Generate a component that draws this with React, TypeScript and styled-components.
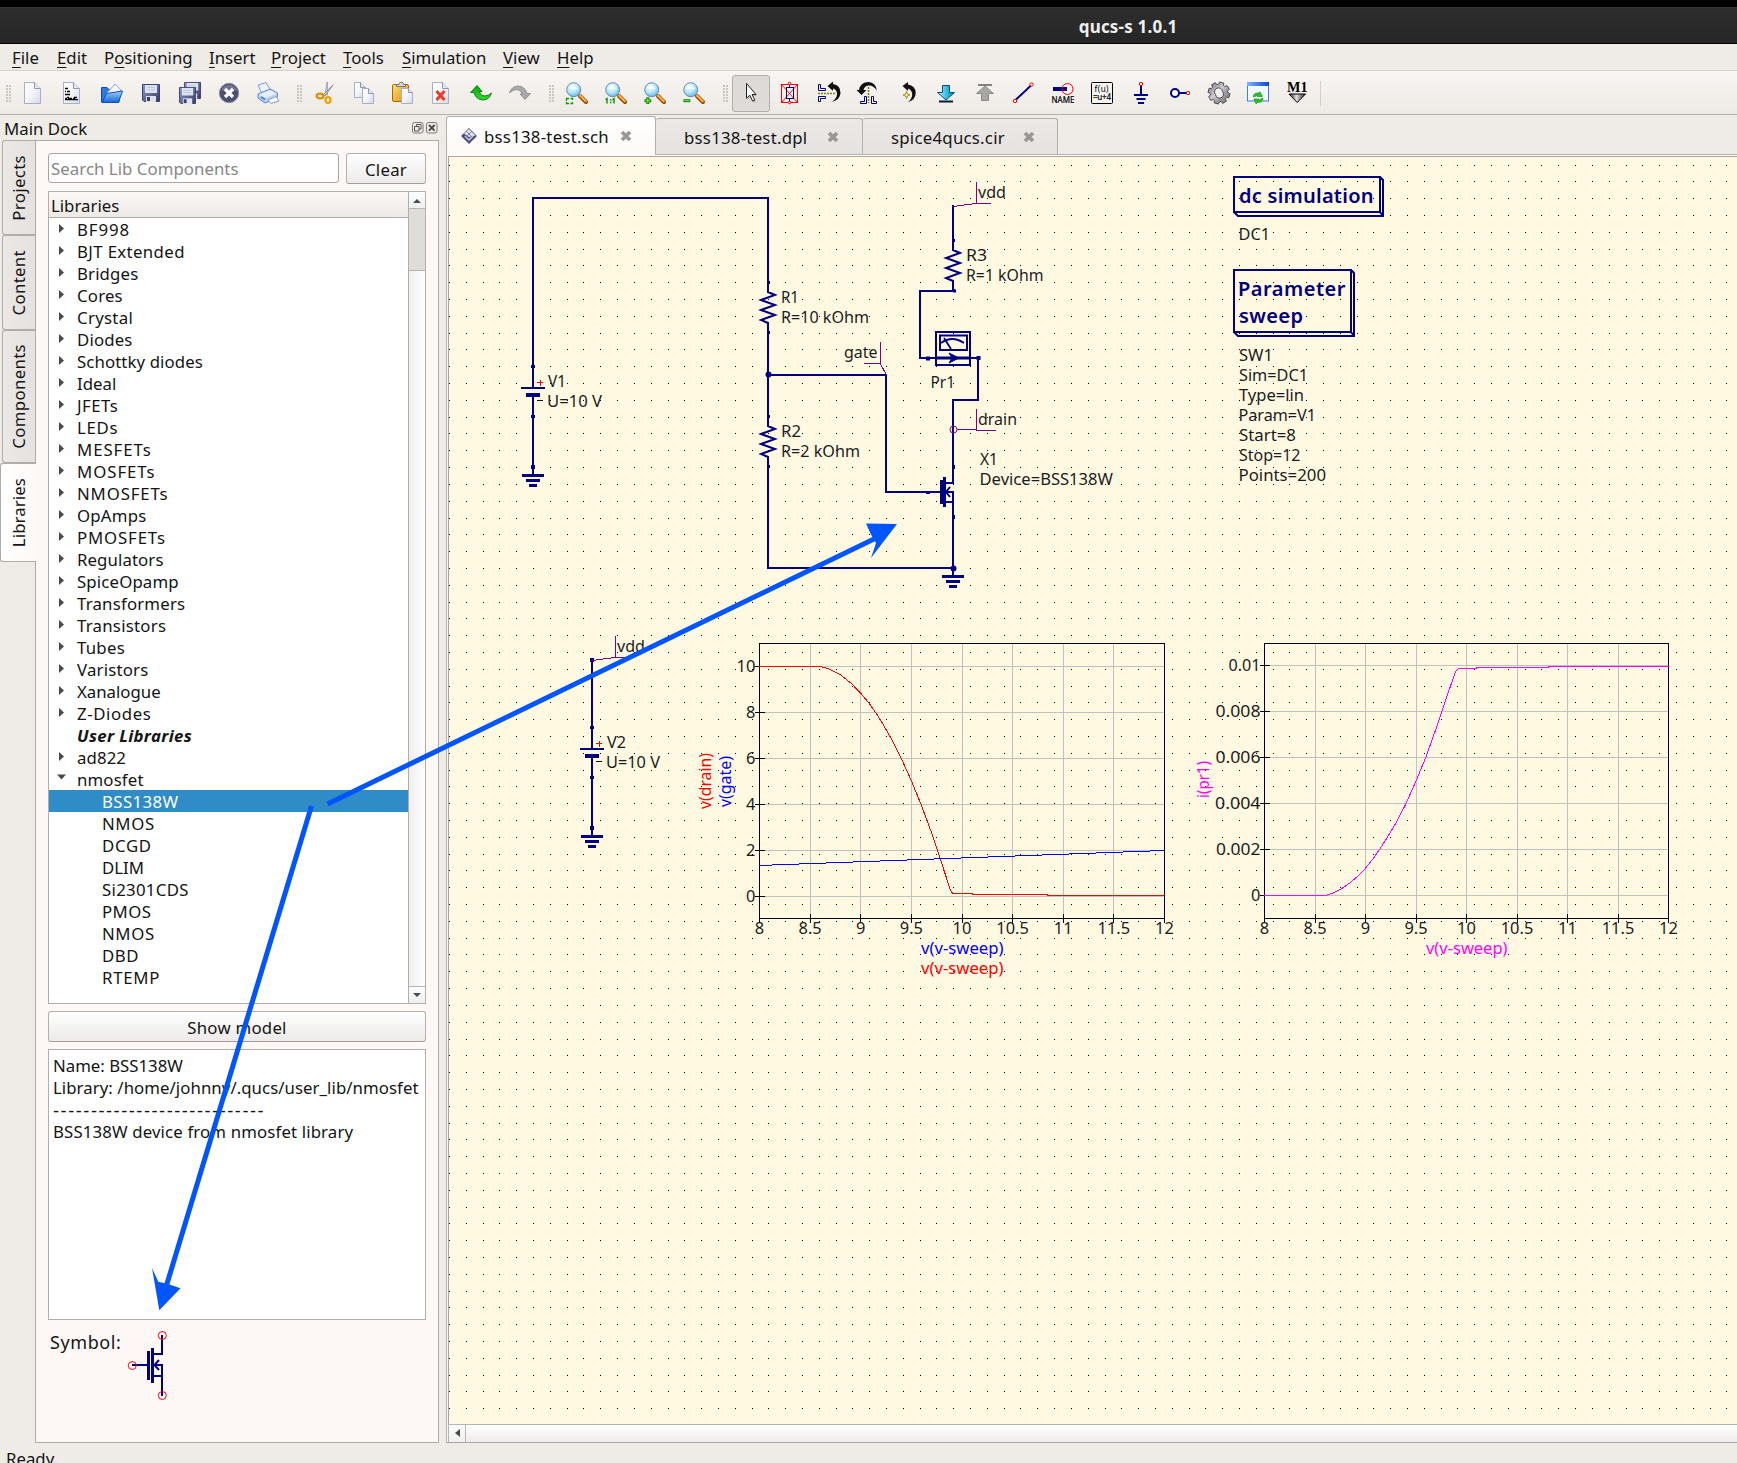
import React from "react";
import styled, { createGlobalStyle } from "styled-components";

const NAVY = "#000080";
const PURPLE = "#800080";
const UI_FONT = '"Noto Sans", "Open Sans", sans-serif';

const GlobalStyle = createGlobalStyle`
  html, body { margin: 0; padding: 0; overflow: hidden; }
  body { font-family: ${UI_FONT}; font-size: 16.8px; color: #141414; background: #efebe7; }
  * { box-sizing: border-box; }
`;

/* ---------- window chrome ---------- */

const Window = styled.div`
  position: relative;
  display: flex;
  flex-direction: column;
  width: 1737px;
  height: 1463px;
  overflow: hidden;
  background: #efebe7;
`;

const TitleBar = styled.header`
  flex: none;
  height: 44px;
  border-top: 7px solid #000;
  border-bottom: 1px solid #050505;
  background: linear-gradient(#383838 0, #2d2d2d 2px, #262626 100%);
  padding: 2px 0 0 519px;
  display: flex;
  align-items: center;
  justify-content: center;
  color: #f0efed;
  font-size: 17px;
  font-weight: 700;
  letter-spacing: 0.2px;
`;

const MenuBar = styled.nav`
  flex: none;
  height: 27px;
  border-bottom: 1px solid #d5d1cd;
  display: flex;
  padding-left: 12px;
  gap: 16px;
  line-height: 28px;
`;

const MenuItem = styled.span<{ $w: number }>`
  width: ${(p) => p.$w}px;
  white-space: nowrap;
  u {
    text-underline-offset: 3px;
    text-decoration-thickness: 1px;
  }
`;

const ToolBar = styled.div`
  flex: none;
  height: 44px;
  border-bottom: 1px solid #b5b1ad;
  background: linear-gradient(#f8f5f2, #edeae6);
  display: flex;
  align-items: flex-start;
  padding-top: 4px;
`;

const Grip = styled.span<{ $before: number }>`
  flex: none;
  width: 5px;
  height: 17px;
  margin: 10px 4px 0 ${(p) => p.$before}px;
  background: radial-gradient(circle at 1px 1px, #c9c5c1 0.8px, transparent 0.9px) 0 0 / 3px 3px;
`;

const ToolGroup = styled.div`
  flex: none;
  display: flex;
`;

const ToolButton = styled.button<{ $pressed?: boolean }>`
  flex: none;
  width: 38px;
  height: 37px;
  margin: 0 1px 0 0;
  padding: 6px 0 0 7px;
  display: flex;
  align-items: flex-start;
  border-radius: 3px;
  border: 1px solid ${(p) => (p.$pressed ? "#b3afab" : "transparent")};
  background: ${(p) => (p.$pressed ? "#dedad7" : "transparent")};
`;

const Separator = styled.span`
  width: 1px;
  height: 25px;
  margin: 6px 0 0 3px;
  background: #d2cecb;
`;

const Workspace = styled.main`
  flex: 1;
  min-height: 0;
  display: flex;
`;

const StatusBar = styled.footer`
  flex: none;
  height: 20px;
  padding-left: 6px;
  line-height: 31px;
`;

/* ---------- dock ---------- */

const Dock = styled.aside`
  flex: none;
  width: 439px;
  display: flex;
  flex-direction: column;
`;

const DockTitle = styled.div`
  flex: none;
  height: 25px;
  padding: 0 1px 0 4px;
  display: flex;
  align-items: center;
  gap: 2px;
  line-height: 26px;
  span { flex: 1; padding-top: 2px; }
`;

const DockBody = styled.div`
  flex: 1;
  min-height: 0;
  display: flex;
`;

const SideTabs = styled.div`
  flex: none;
  width: 35px;
  display: flex;
  flex-direction: column;
  align-items: flex-end;
`;

const SideTab = styled.div<{ $h: number; $active?: boolean }>`
  flex: none;
  width: ${(p) => (p.$active ? 36 : 33)}px;
  margin-right: ${(p) => (p.$active ? -1 : 0)}px;
  height: ${(p) => p.$h}px;
  border: 1px solid #b0acaa;
  border-right: 0;
  border-radius: 3px 0 0 3px;
  background: ${(p) => (p.$active ? "linear-gradient(90deg,#fff,#fdf9f6)" : "linear-gradient(90deg,#ebe8e6,#e5e1df)")};
  z-index: ${(p) => (p.$active ? 1 : 0)};
  display: flex;
  align-items: center;
  justify-content: center;
  letter-spacing: ${(p) => (p.$active ? 0.1 : 0.35)}px;
  span {
    writing-mode: vertical-rl;
    transform: rotate(180deg);
    line-height: 24px;
  }
`;

const DockPanel = styled.section`
  flex: 1;
  min-width: 0;
  border: 1px solid #aeaaa7;
  background: #fdf8f5;
  padding: 12px 12px 0;
  display: flex;
  flex-direction: column;
`;

const SearchRow = styled.div`
  flex: none;
  display: flex;
  gap: 7px;
  height: 31px;
`;

const SearchField = styled.div`
  width: 291px;
  height: 30px;
  border: 1px solid #aaa6a3;
  border-radius: 3px;
  background: #fff;
  padding-left: 2px;
  line-height: 29px;
  letter-spacing: 0.05px;
  color: #868686;
`;

const PushButton = styled.button`
  flex: 1;
  padding: 2px 0 0;
  border: 1px solid #b3afac;
  border-bottom-color: #a29e9b;
  border-radius: 3px;
  background: linear-gradient(#fefefe, #ecebe9);
  font: inherit;
  color: inherit;
  letter-spacing: 0.25px;
  line-height: 27px;
`;

const ShowModel = styled(PushButton)`
  flex: none;
  height: 31px;
  margin-top: 7px;
`;

const Tree = styled.div`
  flex: none;
  height: 813px;
  margin-top: 7px;
  border: 1px solid #b2aeab;
  background: #fff;
  display: flex;
`;

const TreeList = styled.div`
  flex: 1;
  min-width: 0;
`;

const TreeHeader = styled.div`
  height: 26px;
  padding-left: 2px;
  line-height: 28px;
  border-bottom: 1px solid #b2aeab;
  background: linear-gradient(#fbf8f6, #ece9e6);
`;

const TreeRow = styled.div<{ $track?: number; $child?: boolean; $selected?: boolean; $heading?: boolean }>`
  height: 22px;
  line-height: 22px;
  display: flex;
  align-items: flex-start;
  padding: 1px 0 0 ${(p) => (p.$child ? 53 : 8)}px;
  color: ${(p) => (p.$selected ? "#fff" : "inherit")};
  background: ${(p) => (p.$selected ? "#308cc6" : "transparent")};
  font-weight: ${(p) => (p.$heading ? 700 : 400)};
  font-style: ${(p) => (p.$heading ? "italic" : "normal")};
  letter-spacing: ${(p) => p.$track ?? 0}px;
`;

const Twisty = styled.span`
  width: 20px;
  height: 21px;
  flex: none;
  svg { display: block; }
`;

const VScroll = styled.div`
  flex: none;
  width: 17px;
  border-left: 1px solid #b2aeab;
  display: flex;
  flex-direction: column;
  background: linear-gradient(90deg, #f0efed, #fdfdfd);
`;

const VTrack = styled.div`
  height: 62px;
  background: #dfddda;
  border-bottom: 1px solid #b8b4b1;
`;

const ScrollStep = styled.div<{ $side: "top" | "bottom" | "left" }>`
  flex: none;
  width: ${(p) => (p.$side === "left" ? 17 : 16)}px;
  height: 17px;
  background: linear-gradient(#fdfdfd, #f0efee);
  ${(p) => (p.$side === "top" ? "border-bottom" : p.$side === "bottom" ? "border-top" : "border-right")}: 1px solid #b8b4b1;
  svg { display: block; }
`;

const Spacer = styled.div`
  flex: 1;
`;

const InfoBox = styled.div`
  flex: none;
  height: 271px;
  margin-top: 7px;
  padding: 5px 4px;
  border: 1px solid #b2aeab;
  background: #fff;
  line-height: 22px;
  white-space: nowrap;
`;

const InfoLine = styled.div<{ $track?: number }>`
  height: 22px;
  letter-spacing: ${(p) => p.$track ?? 0}px;
`;

const InfoRule = styled(InfoLine)`
  font-family: "DejaVu Sans", sans-serif;
`;

const SymbolRow = styled.div`
  display: flex;
  padding-left: 2px;
  font-size: 18px;
  letter-spacing: 0.6px;
  svg { margin-top: 5px; }
`;

const SymbolLabel = styled.span`
  width: 77px;
  padding-top: 10px;
`;

/* ---------- documents ---------- */

const Documents = styled.section`
  flex: 1;
  min-width: 0;
  margin-left: 7px;
  display: flex;
  flex-direction: column;
`;

const DocTabs = styled.div`
  flex: none;
  height: 40px;
  padding-top: 2px;
  display: flex;
  align-items: flex-end;
  border-bottom: 1px solid #b5b1ae;
`;

const DocTab = styled.div<{ $w: number; $active?: boolean }>`
  width: ${(p) => p.$w}px;
  height: ${(p) => (p.$active ? 39 : 36)}px;
  margin-bottom: ${(p) => (p.$active ? -1 : 0)}px;
  padding-left: ${(p) => (p.$active ? 14 : 28)}px;
  border: 1px solid #b3afac;
  border-bottom: 0;
  border-left-width: ${(p) => (p.$active ? 1 : 0)}px;
  border-radius: 3px 3px 0 0;
  background: ${(p) => (p.$active ? "linear-gradient(#fff,#fdf9f6)" : "linear-gradient(#ebe8e6,#e5e2e0)")};
  display: flex;
  align-items: center;
  line-height: 34px;
`;

const DocName = styled.span<{ $w: number; $indent?: number }>`
  width: ${(p) => p.$w}px;
  margin-left: ${(p) => p.$indent ?? 0}px;
  padding-top: 2px;
  letter-spacing: 0.25px;
  white-space: nowrap;
`;

const DocFrame = styled.div`
  flex: 1;
  min-height: 0;
  border-left: 1px solid #b5b1ae;
  border-bottom: 1px solid #a9a5a2;
  background: #fdf9f6;
  padding: 1px 0 0 1px;
  display: flex;
  flex-direction: column;
`;

const Canvas = styled.div`
  flex: 1;
  min-height: 0;
  border-left: 1px solid #aaa6a3;
  border-top: 1px solid #aaa6a3;
  background: #fff9e2;
  overflow: hidden;
  svg { display: block; }
`;

const HScroll = styled.div`
  flex: none;
  height: 18px;
  border-left: 1px solid #b8b4b1;
  border-top: 1px solid #b8b4b1;
  display: flex;
  background: linear-gradient(#fefefe, #eeedeb);
`;

const Annotations = styled.svg`
  position: absolute;
  left: 0;
  top: 0;
  pointer-events: none;
`;

/* ---------- toolbar icons ---------- */

const IconSvg = styled.svg`
  display: block;
  flex: none;
  overflow: visible;
`;

const SharedDefs = styled.svg`
  position: absolute;
`;

const Icon = ({ children }: { children: React.ReactNode }) => (
  <IconSvg width="22" height="22" viewBox="0 0 22 22">{children}</IconSvg>
);

const Gradients = () => (
  <SharedDefs width="0" height="0">
    <defs>
      <linearGradient id="paper" x1="0" y1="0" x2="1" y2="1">
        <stop offset="0" stopColor="#fff" /><stop offset="0.5" stopColor="#f4f5fa" /><stop offset="1" stopColor="#d3d7e8" />
      </linearGradient>
      <linearGradient id="blueFold" x1="0" y1="0" x2="0" y2="1">
        <stop offset="0" stopColor="#9ad4ff" /><stop offset="1" stopColor="#1663d8" />
      </linearGradient>
      <linearGradient id="floppy" x1="0" y1="0" x2="1" y2="1">
        <stop offset="0" stopColor="#8f9cc4" /><stop offset="1" stopColor="#343a66" />
      </linearGradient>
      <radialGradient id="lens" cx="0.4" cy="0.3" r="0.8">
        <stop offset="0" stopColor="#fff" /><stop offset="0.5" stopColor="#b6e6fb" /><stop offset="1" stopColor="#4fa8e0" />
      </radialGradient>
      <linearGradient id="gold" x1="0" y1="0" x2="1" y2="1">
        <stop offset="0" stopColor="#ffe27a" /><stop offset="1" stopColor="#e08a00" />
      </linearGradient>
      <linearGradient id="greenG" x1="0" y1="0" x2="0" y2="1">
        <stop offset="0" stopColor="#0aa50a" /><stop offset="1" stopColor="#2be02b" />
      </linearGradient>
      <linearGradient id="grayG" x1="0" y1="0" x2="1" y2="1">
        <stop offset="0" stopColor="#6d6b72" /><stop offset="0.45" stopColor="#cfccd2" /><stop offset="0.6" stopColor="#a5a2a8" /><stop offset="1" stopColor="#6f6d72" />
      </linearGradient>
      <linearGradient id="cyanG" x1="0" y1="0" x2="1" y2="0">
        <stop offset="0" stopColor="#c8f4ff" /><stop offset="0.5" stopColor="#39bfe8" /><stop offset="1" stopColor="#0a7fae" />
      </linearGradient>
      <linearGradient id="silver" x1="0" y1="0" x2="1" y2="0">
        <stop offset="0" stopColor="#222" /><stop offset="0.45" stopColor="#ddd" /><stop offset="1" stopColor="#222" />
      </linearGradient>
      <linearGradient id="bar" x1="0" y1="0" x2="1" y2="0">
        <stop offset="0" stopColor="#7fb4ff" /><stop offset="1" stopColor="#0a48d0" />
      </linearGradient>
    </defs>
  </SharedDefs>
);

const Page = ({ x = 1, y = 0, w = 16, h = 21, f = 6 }) => (
  <g strokeWidth="1">
    <path d={`M${x + 0.5} ${y + 0.5}H${x + w - f + 0.5}L${x + w + 0.5} ${y + f + 0.5}V${y + h + 0.5}H${x + 0.5}Z`} fill="url(#paper)" stroke="#a9aec4" />
    <path d={`M${x + w - f + 0.5} ${y + 0.5}V${y + f + 0.5}H${x + w + 0.5}`} fill="#e3e6f2" stroke="#8f95b3" />
  </g>
);

const Floppy = ({ x, y, s }: { x: number; y: number; s: number }) => (
  <g transform={`translate(${x} ${y}) scale(${s / 18})`}>
    <path d="M0.5 0.5H17.5V17.5H2L0.5 16Z" fill="url(#floppy)" stroke="#3d4370" />
    <rect x="3" y="1" width="12" height="8" fill="#dde2f0" />
    <path d="M5 3.5H13M5 6H13" stroke="#c3c9da" />
    <rect x="4" y="12" width="10" height="6" fill="#dfe3ee" />
    <rect x="5" y="13" width="3" height="4" fill="#343a66" />
  </g>
);

const Magnifier = ({ children }: { children?: React.ReactNode }) => (
  <Icon>
    <path d="M14 14L20 20" stroke="#8a4a00" strokeWidth="4" strokeLinecap="round" />
    <path d="M14 13.5L19.8 19.3" stroke="#ffb54a" strokeWidth="2" strokeLinecap="round" />
    <circle cx="7.7" cy="7.7" r="7" fill="url(#lens)" stroke="#6a8fae" />
    <path d="M3 7A5 4.5 0 0 1 12 7" fill="#fff" opacity="0.7" />
    {children}
  </Icon>
);

const gearOutline = () => {
  const pts: string[] = [];
  const teeth = 8;
  for (let i = 0; i < teeth; i++) {
    [[-0.3, 8.6], [-0.2, 11], [0.2, 11], [0.3, 8.6]].forEach(([da, r]) => {
      const a = (i / teeth) * Math.PI * 2 + 0.25 + da;
      pts.push(`${(11 + r * Math.cos(a)).toFixed(2)} ${(11 + r * Math.sin(a)).toFixed(2)}`);
    });
  }
  return `M${pts.join("L")}Z M7.5 12.5a4 4 0 1 0 7 -3a4 4 0 1 0 -7 3Z`;
};

const icons: Record<string, React.ReactNode> = {
  newDoc: <Icon><Page /></Icon>,
  newText: (
    <Icon>
      <Page />
      <g stroke="#000" strokeWidth="1.3">
        <path d="M3 6.5H6M3 9.5H4M5 9.5H8M3 12.5H8M3 16.5H5M6 16.5H10M11 16.5H13M3 17.7H16M5 15.5H7M12 15.5H15" />
      </g>
    </Icon>
  ),
  open: (
    <Icon>
      <path d="M0.5 20V5.5H6L8 7.5H18V20Z" fill="#2a7be4" stroke="#1249a8" />
      <path d="M5 12L14 2L20 8L17 16Z" fill="#f2f5fc" stroke="#9aa5c8" />
      <path d="M1 20.5L5.5 11.5L21.5 9L17.5 20.5Z" fill="url(#blueFold)" stroke="#0d4fbf" />
    </Icon>
  ),
  save: <Icon><Floppy x={2} y={2} s={18} /></Icon>,
  saveAll: <Icon><Floppy x={5} y={0} s={17} /><Floppy x={0} y={5} s={17} /></Icon>,
  close: (
    <Icon>
      <circle cx="11" cy="11" r="9.7" fill="#4c5070" stroke="#8d90a6" />
      <path d="M3 8A9 9 0 0 1 19 8Q11 11 3 8" fill="#8a8ea8" opacity="0.6" />
      <path d="M7 7L15 15M15 7L7 15" stroke="#fff" strokeWidth="3.2" />
    </Icon>
  ),
  print: (
    <Icon>
      <path d="M1 3L9 0.5L14 9L5 12Z" fill="#edf3ff" stroke="#7f9cd8" />
      <path d="M1 12L13 7L20.5 11L20 16L8 21L1 16Z" fill="#bcd2fb" stroke="#5c83d6" />
      <path d="M2 12.5L13 8L20 11.5L8.5 16Z" fill="#e6efff" />
      <path d="M11 18L19 14.5L22 19L14 21.5Z" fill="#fff" stroke="#7f9cd8" />
      <path d="M4 15L8 17.5" stroke="#3b7cf0" strokeWidth="1.6" />
    </Icon>
  ),
  cut: (
    <Icon>
      <path d="M13.2 0L11 12L13.5 13Z" fill="#e6e8ee" stroke="#8a8d99" strokeWidth="0.8" />
      <path d="M19 3L9 13L11 14Z" fill="#cfd2da" stroke="#777b88" strokeWidth="0.8" />
      <ellipse cx="6" cy="14" rx="3.4" ry="2.4" fill="none" stroke="#e08e00" strokeWidth="2.2" />
      <ellipse cx="14" cy="18" rx="2.5" ry="3" fill="none" stroke="#f0a000" strokeWidth="2.2" />
    </Icon>
  ),
  copy: <Icon><Page x={1} y={0} w={11} h={15} f={5} /><Page x={9} y={6} w={11} h={15} f={5} /></Icon>,
  paste: (
    <Icon>
      <rect x="0.5" y="2.5" width="16" height="17" rx="1.5" fill="url(#gold)" stroke="#a86a00" />
      <path d="M4.5 4.5V2.5H7A2.2 2.2 0 0 1 11.5 2.5H13.5V4.5Z" fill="#d9dbe3" stroke="#777" />
      <Page x={9} y={6} w={11} h={15} f={4} />
    </Icon>
  ),
  remove: (
    <Icon>
      <Page />
      <path d="M5.5 9L13.5 18M13.5 9L5.5 18" stroke="#f03a22" strokeWidth="3" />
    </Icon>
  ),
  undo: (
    <Icon>
      <path d="M0.5 10.5L7 3.5L12 9.5H9Q11 14.5 15 14Q19 13.5 21.5 11Q19.5 17.5 13.5 18Q6 18 4 10.5Z" fill="url(#greenG)" stroke="#087808" strokeWidth="0.9" />
    </Icon>
  ),
  redo: (
    <Icon>
      <path d="M21.5 11.5L16 17.5L11 12H13.5Q12 8 8 7.5Q4 7.5 0.5 11Q2.5 4.5 8.5 4Q16 4 18 11.5Z" fill="#a9a9a9" stroke="#8b8b8b" strokeWidth="0.9" />
    </Icon>
  ),
  zoomFit: <Magnifier><path d="M0.5 19V16.5H3M4.5 16.5H6.5V18M6.5 20V21.5H4.5M3 21.5H0.5V20" fill="none" stroke="#0a9a0a" strokeWidth="1.3" /></Magnifier>,
  zoomOne: <Magnifier><path d="M0.5 17.7L2 16.7V21.5M5 18H6.5M5 20.5H6.5M7.5 17.7L9 16.7V21.5" fill="none" stroke="#0a9a0a" strokeWidth="1.5" /></Magnifier>,
  zoomIn: <Magnifier><path d="M3.8 15.3V22M0.5 18.7H7.2" stroke="#0a8a0a" strokeWidth="3" /><path d="M1.5 18.7H6.2M3.8 16.3V21.2" stroke="#7df03c" /></Magnifier>,
  zoomOut: <Magnifier><path d="M0.5 18.7H7.3" stroke="#0a8a0a" strokeWidth="3" /><path d="M1.5 18.7H6.4" stroke="#7df03c" /></Magnifier>,
  pointer: (
    <Icon>
      <path d="M8 3L17 14H13L16 19.5L13.5 21L10.5 15L7.5 18Z" fill="#777" opacity="0.35" />
      <path d="M6.5 1.5V16.2L9.8 13.2L12.6 19L14.8 18L12 12.5H16Z" fill="#fff" stroke="#222" strokeWidth="1" />
    </Icon>
  ),
  deactivate: (
    <Icon>
      <path d="M3 3L18 20M18 3L3 20" stroke="#f00" strokeWidth="0.9" />
      <g shapeRendering="crispEdges">
        <path d="M7.5 5.5H14.5V16.5H7.5ZM10.5 2V5M10.5 17V20" fill="none" stroke={NAVY} />
        <path d="M2.5 2.5H18.5V20.5H2.5Z" fill="none" stroke="#f00" />
      </g>
      <circle cx="10.5" cy="1.5" r="1.3" fill="#fff" stroke="#f00" />
      <circle cx="10.5" cy="20.5" r="1.3" fill="#fff" stroke="#f00" />
    </Icon>
  ),
  mirrorX: (
    <Icon>
      <path d="M0.5 2.5H2.5V6.5H7.5V8.5H0.5Z M0.5 19.5H2.5V16.5H7.5V14.5H0.5Z" fill="#fff" stroke={NAVY} strokeWidth="1" />
      <path d="M0 11.5H17" stroke="#808000" strokeWidth="1.5" strokeDasharray="2 1" />
      <path d="M9.5 4L15 -0.5V2Q22.5 3 22.5 11Q22 18 14 19.8Q19 16.5 19 12Q19 7.5 15 6.5V9Z" fill="#111" />
    </Icon>
  ),
  mirrorY: (
    <Icon>
      <path d="M3.5 21.5V19.5H7.5V14.5H9.5V21.5Z M19.5 21.5V19.5H16.5V14.5H14.5V21.5Z" fill="#fff" stroke={NAVY} strokeWidth="1" />
      <path d="M11.5 5V21" stroke="#808000" strokeWidth="1.5" strokeDasharray="2 1" />
      <path d="M4.5 13L-0.5 8H2Q3.5 0 11.5 0Q19 0.5 20 9Q17 3.5 12 3.5Q7.5 3.5 6.5 8H9.5Z" fill="#111" />
    </Icon>
  ),
  rotate: (
    <Icon>
      <path d="M6.5 4L12 0V2.5Q19.5 3.5 19.7 11Q19.5 18 12 20Q16.5 16.5 16.2 12Q16 8 12 6.5V9Z" fill="#111" />
      <path d="M10.5 9.5L11.5 12L14 13L11.5 14L10.5 16.5L9.5 14L7 13L9.5 12Z" fill="#ffe76a" stroke="#6b5c00" strokeWidth="0.6" />
    </Icon>
  ),
  pushIn: (
    <Icon>
      <path d="M7.5 3.5H14.5V10.5H19.5L11 18L2.5 10.5H7.5Z" fill="url(#cyanG)" stroke="#0b4f78" />
      <path d="M4 19.5H18" stroke="#061c38" strokeWidth="2" />
    </Icon>
  ),
  popOut: (
    <Icon>
      <path d="M7.5 18.5H14.5V11.5H19.5L11 4L2.5 11.5H7.5Z" fill="#a9a7a5" stroke="#8c8a88" />
      <path d="M4 3H18" stroke="#858381" strokeWidth="2" />
    </Icon>
  ),
  wire: (
    <Icon>
      <path d="M3 17.5L18.5 3" stroke={NAVY} strokeWidth="2" />
      <circle cx="2" cy="19" r="1.7" fill="#fff" stroke="#f00" />
      <circle cx="18.5" cy="2.5" r="1.7" fill="#fff" stroke="#f00" />
    </Icon>
  ),
  name: (
    <Icon>
      <path d="M1 7H15" stroke={NAVY} strokeWidth="4" />
      <circle cx="15.5" cy="7" r="5.5" fill="none" stroke="#f00" />
      <text x="-0.5" y="20.5" fontFamily={UI_FONT} fontSize="8" textLength="23" fill="#000" stroke="#000" strokeWidth="0.2">NAME</text>
    </Icon>
  ),
  equation: (
    <Icon>
      <rect x="0.5" y="0.5" width="21" height="21" rx="1" fill="#f7f4f0" stroke="#000" />
      <text x="3.5" y="10" fontFamily={UI_FONT} fontSize="8" textLength="14" fill="#000">f(u)</text>
      <text x="2" y="18" fontFamily={UI_FONT} fontSize="8" textLength="18" fill="#000" stroke="#000" strokeWidth="0.2">=u+4</text>
    </Icon>
  ),
  ground: (
    <Icon>
      <path d="M11 3V12" stroke={NAVY} strokeWidth="2" />
      <path d="M4 13H18M6.5 17H15.5M8 21H14" stroke={NAVY} strokeWidth="2" />
      <circle cx="11" cy="2" r="1.7" fill="#fff" stroke="#f00" />
    </Icon>
  ),
  port: (
    <Icon>
      <circle cx="6" cy="11" r="4" fill="#fff" stroke={NAVY} strokeWidth="2" />
      <path d="M10 11H17.5" stroke={NAVY} strokeWidth="2" />
      <circle cx="19" cy="11" r="1.7" fill="#fff" stroke="#f00" />
    </Icon>
  ),
  simulate: (
    <Icon>
      <path d={gearOutline()} fill="url(#grayG)" fillRule="evenodd" stroke="#4f4d54" strokeWidth="1" strokeLinejoin="round" />
    </Icon>
  ),
  viewData: (
    <Icon>
      <rect x="0.5" y="0.5" width="21" height="18.5" fill="#f3f7ff" stroke="#3f7be0" />
      <rect x="0" y="0" width="22" height="4" fill="url(#bar)" />
      <path d="M6 14.5Q7 10.5 11.5 11L13 9.8L15.5 14.5H10L10.8 13.2Q8.500 12.800 7.800 15Z" fill="#2bc42b" stroke="#0b8a0b" strokeWidth="0.6" />
      <path d="M16.2 16.5Q15 21 10.5 20.5L9 21.800L6.8 17H12.200L11.400 18.300Q13.500 18.500 14.400 16.200Z" fill="#2bc42b" stroke="#0b8a0b" strokeWidth="0.6" />
    </Icon>
  ),
  marker: (
    <Icon>
      <text x="1" y="9.5" fontFamily='"Liberation Serif", serif' fontSize="14.5" fontWeight="700" textLength="20.5" lengthAdjust="spacingAndGlyphs" fill="#000">M1</text>
      <path d="M3 12H19.5L11.2 20.5Z" fill="url(#silver)" stroke="#000" />
    </Icon>
  ),
};

const toolGroups: { before: number; tools: string[] }[] = [
  { before: 6, tools: ["newDoc", "newText", "open", "save", "saveAll", "close", "print"] },
  { before: 9, tools: ["cut", "copy", "paste", "remove", "undo", "redo"] },
  { before: 9, tools: ["zoomFit", "zoomOne", "zoomIn", "zoomOut"] },
  {
    before: 9,
    tools: ["pointer", "deactivate", "mirrorX", "mirrorY", "rotate", "pushIn", "popOut", "wire", "name", "equation", "ground", "port", "simulate", "viewData", "marker"],
  },
];

/* ---------- data ---------- */

const menus: [string, string, string, number][] = [
  ["", "F", "ile", 29], ["", "E", "dit", 31], ["P", "o", "sitioning", 89], ["", "I", "nsert", 46],
  ["", "P", "roject", 56], ["", "T", "ools", 43], ["", "S", "imulation", 85], ["", "V", "iew", 38], ["", "H", "elp", 38],
];

/* name and letter tracking */
const libraries: [string, number][] = [
  ["BF998", 0.9], ["BJT Extended", 0.37], ["Bridges", 0.15], ["Cores", 0.2], ["Crystal", 0.3], ["Diodes", 0.15],
  ["Schottky diodes", 0.1], ["Ideal", 0], ["JFETs", 0.45], ["LEDs", 0.7], ["MESFETs", 0.95], ["MOSFETs", 0.95],
  ["NMOSFETs", 0.85], ["OpAmps", 0.2], ["PMOSFETs", 0.85], ["Regulators", 0.1], ["SpiceOpamp", 0.15],
  ["Transformers", 0.2], ["Transistors", 0.25], ["Tubes", 0.25], ["Varistors", 0.2], ["Xanalogue", 0], ["Z-Diodes", 0.6],
];
const nmosfetParts: [string, number][] = [
  ["BSS138W", 0.4], ["NMOS", 0.6], ["DCGD", 0.7], ["DLIM", 0], ["Si2301CDS", 0.3], ["PMOS", 0.4], ["NMOS", 0.6], ["DBD", 0.5], ["RTEMP", 0.75],
];

const CloseMark = () => (
  <svg width="12" height="12" viewBox="0 0 12 12">
    <path d="M2 2L10 10M10 2L2 10" stroke="#999894" strokeWidth="3.8" />
  </svg>
);

const DockButton = ({ kind }: { kind: "float" | "close" }) => (
  <svg width="12" height="12" viewBox="0 0 12 12">
    <rect x="0.5" y="0.5" width="10.5" height="10.5" rx="2" fill="none" stroke="#7b7977" />
    {kind === "float"
      ? <path d="M4.5 4.5V2.5H9V7H7M2.5 4.5H7V9H2.5Z" fill="none" stroke="#555" />
      : <path d="M3 3L8.6 8.6M8.6 3L3 8.6" stroke="#4a4a4a" strokeWidth="1.9" />}
  </svg>
);

const Arrow = ({ d }: { d: string }) => (
  <svg width="16" height="16" viewBox="0 0 16 16"><path d={d} fill="#4a4a4a" /></svg>
);

/* ---------- schematic ---------- */

const CANVAS = { x: 449, y: 157, w: 1288, h: 1267 };
const GRID = 20 / 1.19;

const gridDots = () => {
  let d = "";
  for (let j = 0; ; j++) {
    const y = Math.floor(165.08 + j * GRID);
    if (y >= CANVAS.y + CANVAS.h) break;
    for (let i = 0; ; i++) {
      const x = Math.floor(449.545 + i * GRID);
      if (x >= CANVAS.x + CANVAS.w) break;
      d += `M${x} ${y}h1v1h-1z`;
    }
  }
  return d;
};

const Label = styled.text<{ $c?: string }>`
  font-family: ${UI_FONT};
  font-size: 16.4px;
  fill: ${(p) => p.$c ?? "#1c1c1c"};
`;

const BlockTitle = styled.text`
  font-family: ${UI_FONT};
  font-size: 20px;
  font-weight: 600;
  fill: ${NAVY};
`;

const T = ({ x, y, to, c, children }: { x: number; y: number; to?: number; c?: string; children: string }) => (
  <Label x={x} y={y} $c={c} textLength={to ? to - x : undefined} lengthAdjust="spacingAndGlyphs">{children}</Label>
);

const Resistor = ({ x, y }: { x: number; y: number }) => (
  <g>
    <path d={`M${x} ${y - 1}v1l7 3l-14 5l14 5l-14 5l14 5l-14 5l7 3v1`} fill="none" stroke={NAVY} strokeWidth="2" />
    <path d={`M${x + 1} ${y - 11}h1v3h-1zM${x + 1} ${y + 39}h1v3h-1z`} fill={NAVY} />
  </g>
);

const Ground = ({ x, y }: { x: number; y: number }) => (
  <path d={`M${x - 11} ${y}h22v3h-22zM${x - 7} ${y + 5}h14v3h-14zM${x - 4} ${y + 10}h8v3h-8z`} fill={NAVY} />
);

const Source = ({ x, y }: { x: number; y: number }) => (
  <g>
    <path
      d={`M${x - 12} ${y}h24v2h-24zM${x - 7} ${y + 6}h14v4h-14zM${x - 2} ${y - 22}h4v3h-4zM${x - 2} ${y + 28}h4v3h-4zM${x - 2} ${y + 78}h4v4h-4z`}
      fill={NAVY}
    />
    <path d={`M${x + 4} ${y - 4.5}h6m-3 -3v6`} stroke="#f00" />
    <path d={`M${x + 4} ${y + 13.5}h6`} stroke="#111" />
  </g>
);

interface PlotProps {
  x: number;
  w: number;
  y0: number;
  labels: [string, number?][];
  children: React.ReactNode;
}

const Plot = ({ x, w, y0, labels, children }: PlotProps) => {
  const gx = (n: number) => Math.floor(x + (n * w) / 8) + 0.5;
  return (
    <g shapeRendering="crispEdges">
      {[1, 2, 3, 4, 5, 6, 7].map((n) => (
        <path key={n} d={`M${gx(n)} 644V918`} stroke="#c0c0c0" />
      ))}
      {labels.map((l, n) => (
        <path key={n} d={`M${x} ${y0 + n * 46}H${x + w}`} stroke="#c0c0c0" />
      ))}
      <rect x={x} y="643.5" width={w} height="275" fill="none" stroke="#000" />
      {labels.map((l, n) => (
        <g key={n}>
          <path d={`M${x - 5} ${y0 + n * 46}h10`} stroke="#000" />
          <Label x={x - 4} y={y0 + n * 46 + 5} textAnchor="end" textLength={l[1]} lengthAdjust="spacingAndGlyphs">{l[0]}</Label>
        </g>
      ))}
      {["8", "8.5", "9", "9.5", "10", "10.5", "11", "11.5", "12"].map((l, n) => (
        <g key={l}>
          <path d={`M${gx(n)} ${n % 8 ? 914 : 918}V923`} stroke="#000" />
          <Label x={x + (n * w) / 8} y="933.5" textAnchor="middle">{l}</Label>
        </g>
      ))}
      {children}
    </g>
  );
};

const Schematic = () => (
  <svg width={CANVAS.w} height={CANVAS.h} viewBox={`${CANVAS.x} ${CANVAS.y} ${CANVAS.w} ${CANVAS.h}`}>
    <path d={gridDots()} fill="#000" shapeRendering="crispEdges" />

    <g fill="none" stroke={NAVY} strokeWidth="2" shapeRendering="crispEdges">
      <path d="M533 387V198H768V291M533 397V474" />
      <path d="M768 323V426M768 457V568H953M768 375H886V492H941" />
      <path d="M953 205V250M953 281V291H920V358H978V400H953V483M953 492V575" />
      <path d="M592 659V748M592 758V835" />
    </g>
    <g fill={NAVY}>
      <circle cx="768.5" cy="374.5" r="3" />
      <circle cx="953.5" cy="568.5" r="3" />
      <rect x="590" y="658" width="4" height="4" />
      <rect x="953" y="289.5" width="3" height="3" />
      <rect x="926" y="356.5" width="4" height="4" />
      <rect x="976.5" y="356" width="4" height="4" />
      <rect x="926" y="492" width="4" height="2" />
      <rect x="954" y="465" width="1" height="4" />
      <rect x="954" y="515" width="1" height="4" />
    </g>
    <g shapeRendering="crispEdges">
      <Source x={533} y={387} />
      <Source x={592} y={748} />
      <Ground x={533} y={474} />
      <Ground x={592} y={835} />
      <Ground x={953} y={575} />
    </g>
    <Resistor x={768} y={292} />
    <Resistor x={768} y={426} />
    <Resistor x={953} y={250} />

    <T x={548} y={387} to={566}>V1</T>
    <T x={547} y={407} to={602}>U=10 V</T>
    <T x={781} y={303} to={799}>R1</T>
    <T x={781} y={323} to={869}>R=10 kOhm</T>
    <T x={781} y={437} to={801}>R2</T>
    <T x={781} y={457} to={860}>R=2 kOhm</T>
    <T x={966} y={261} to={987}>R3</T>
    <T x={966} y={281} to={1043.5}>R=1 kOhm</T>
    <T x={930.5} y={388} to={955}>Pr1</T>
    <T x={980} y={465} to={998}>X1</T>
    <T x={979.5} y={485} to={1113}>Device=BSS138W</T>
    <T x={607} y={748} to={626}>V2</T>
    <T x={606} y={768} to={660}>U=10 V</T>

    {/* current probe */}
    <g fill="none" stroke={NAVY} strokeWidth="2">
      <path d="M936 332H970V365H936ZM940 335.5H967V350H940Z" />
      <path d="M941 343Q952 335 964 343M944 338L951 349" strokeWidth="1.8" />
      <path d="M949 353L959 358L949 363L952 358Z" fill={NAVY} strokeWidth="1" />
      <path d="M936 358H970" strokeWidth="3" />
    </g>

    {/* transistor X1 */}
    <g fill="none" stroke={NAVY} strokeWidth="2" shapeRendering="crispEdges">
      <path d="M940 480h4v24h-4zM943 477h3v30h-3z" fill={NAVY} stroke="none" />
      <path d="M945 483H954M945 492H954M945 502H954" />
      <path d="M950 487L946 492L950 497" shapeRendering="auto" />
    </g>

    {/* net labels */}
    <g fill="none" stroke={PURPLE} shapeRendering="crispEdges">
      <path d="M976.5 182V203.5H991M953 206.5L976 203.5" />
      <path d="M880.5 342V363.5H864M880.5 364L886.5 375" />
      <path d="M976.5 409V430.5H996M957 429.5H976" />
      <path d="M615.5 636V657.5H631M592 660.5L615 657.5" />
      <circle cx="953.5" cy="429.5" r="3.5" shapeRendering="auto" />
    </g>
    <T x={978} y={198} to={1006}>vdd</T>
    <T x={844} y={358} to={877.5}>gate</T>
    <T x={978} y={425} to={1017}>drain</T>
    <T x={617} y={652} to={645}>vdd</T>

    {/* simulation blocks */}
    <g fill="none" stroke={NAVY} strokeWidth="2">
      <path d="M1234 177H1380V212H1234ZM1380 177L1383 180V216H1238L1234 212M1380 212L1383 216" />
      <path d="M1234 270H1351V332H1234ZM1351 270L1354 273V336H1238L1234 332M1351 332L1354 336" />
    </g>
    <BlockTitle x="1239" y="202.5" textLength="134.5">dc simulation</BlockTitle>
    <BlockTitle x="1238" y="295.5" textLength="107.5">Parameter</BlockTitle>
    <BlockTitle x="1239" y="322.5" textLength="64">sweep</BlockTitle>
    <T x={1238.5} y={240} to={1270}>DC1</T>
    <T x={1239} y={361} to={1273}>SW1</T>
    <T x={1239} y={381} to={1308}>Sim=DC1</T>
    <T x={1239} y={401} to={1304}>Type=lin</T>
    <T x={1238.5} y={421} to={1316}>Param=V1</T>
    <T x={1239} y={441} to={1296}>Start=8</T>
    <T x={1239} y={461} to={1300.5}>Stop=12</T>
    <T x={1238.5} y={481} to={1326}>Points=200</T>

    <Plot x={759.5} w={405} y0={666.5} labels={[["10", 19], ["8"], ["6"], ["4"], ["2"], ["0"]]}>
      <polyline
        fill="none" stroke="#f00"
        points="759,666.5 819,666.5 824,667.3 830,669.3 840.7,675 850.6,682.8 860.5,692.9 869.6,704 876.3,713.5 882.3,723 891.4,739 901.2,758.3 911.5,781 921,804.3 930.9,831 940.4,859.3 945.5,875 950.7,890.7 952.6,893.5 972,893.5 973,894.5 1047,894.5 1048,895.5 1164,895.5"
      />
      <path d="M759 865.5L1164 850.5" stroke="#00f" fill="none" />
      <T x={921} y={954} to={1003.5} c="#00f">v(v-sweep)</T>
      <T x={921} y={974} to={1003.5} c="#f00">v(v-sweep)</T>
      <g transform="translate(711 809) rotate(-90)"><T x={0} y={0} to={56} c="#f00">v(drain)</T></g>
      <g transform="translate(731 807) rotate(-90)"><T x={0} y={0} to={51} c="#00f">v(gate)</T></g>
    </Plot>

    <Plot x={1264.5} w={404} y0={665.5} labels={[["0.01", 32], ["0.008", 45], ["0.006", 45], ["0.004", 45.5], ["0.002", 44.5], ["0"]]}>
      <polyline
        fill="none" stroke="#f0f"
        points="1264,895.5 1325,895.5 1332.8,893.3 1340.6,889.3 1349.8,883 1359.4,874.8 1365.4,868.3 1373.6,858 1380.7,847.8 1387,838 1396.7,821.7 1405.6,804.3 1415.5,782.3 1425.8,757.3 1435.8,729.3 1442.9,708.3 1452.8,679.3 1456,670.7 1458.5,668.5 1476,668.5 1477,667.5 1548,667.5 1549,666.5 1669,666.5"
      />
      <T x={1426} y={954} to={1507.5} c="#f0f">v(v-sweep)</T>
      <g transform="translate(1208.5 798) rotate(-90)"><T x={0} y={0} to={37} c="#f0f">i(pr1)</T></g>
    </Plot>
  </svg>
);

const SymbolPreview = () => (
  <svg width="60" height="80" viewBox="127 1325 60 80">
    <g fill="none" stroke={NAVY} strokeWidth="2" shapeRendering="crispEdges">
      <path d="M147 1351h3v29h-3zM151 1348h3v35h-3z" fill={NAVY} stroke="none" />
      <path d="M132 1365H147M154 1354H162V1335M154 1365H162V1396M154 1376H162" />
      <path d="M159 1360L154.5 1365L159 1370" shapeRendering="auto" />
    </g>
    <g fill="none" stroke="#f00">
      <circle cx="132.3" cy="1365.5" r="4" />
      <circle cx="162.3" cy="1335.5" r="4" />
      <circle cx="162.3" cy="1395.5" r="4" />
    </g>
  </svg>
);

const DocIcon = () => (
  <svg width="16" height="16" viewBox="0 0 16 16">
    <path d="M8 0L16 8L8 16L0 8Z" fill="#4d4f78" />
    <path d="M8 1L14.5 7.5L8 9L3 5.5Z" fill="#dfe1f0" />
    <path d="M4 8L8 12L12 8" fill="none" stroke="#c9cce4" strokeWidth="1.5" />
    <path d="M5 3L11 9M11 3L5 9" stroke="#7d80a8" />
  </svg>
);

const COLLAPSED = "M2 5L7 9.500L2 14Z";
const EXPANDED = "M0 5.500H9L4.500 10.500Z";

export default function App() {
  return (
    <Window>
      <GlobalStyle />
      <Gradients />
      <TitleBar>qucs-s 1.0.1</TitleBar>
      <MenuBar>
        {menus.map(([a, u, b, w]) => (
          <MenuItem key={u + b} $w={w}>{a}<u>{u}</u>{b}</MenuItem>
        ))}
      </MenuBar>
      <ToolBar>
        {toolGroups.map((g) => (
          <React.Fragment key={g.tools[0]}>
            <Grip $before={g.before} />
            <ToolGroup>
              {g.tools.map((t) => (
                <ToolButton key={t} $pressed={t === "pointer"}>{icons[t]}</ToolButton>
              ))}
            </ToolGroup>
          </React.Fragment>
        ))}
        <Separator />
      </ToolBar>

      <Workspace>
        <Dock>
          <DockTitle>
            <span>Main Dock</span>
            <DockButton kind="float" />
            <DockButton kind="close" />
          </DockTitle>
          <DockBody>
            <SideTabs>
              <SideTab $h={95}><span>Projects</span></SideTab>
              <SideTab $h={95}><span>Content</span></SideTab>
              <SideTab $h={133}><span>Components</span></SideTab>
              <SideTab $h={99} $active><span>Libraries</span></SideTab>
            </SideTabs>
            <DockPanel>
              <SearchRow>
                <SearchField>Search Lib Components</SearchField>
                <PushButton>Clear</PushButton>
              </SearchRow>
              <Tree>
                <TreeList>
                  <TreeHeader>Libraries</TreeHeader>
                  {libraries.map(([name, track]) => (
                    <TreeRow key={name} $track={track}>
                      <Twisty><Arrow d={COLLAPSED} /></Twisty>{name}
                    </TreeRow>
                  ))}
                  <TreeRow $heading $track={0.35}><Twisty />User Libraries</TreeRow>
                  <TreeRow $track={0.1}><Twisty><Arrow d={COLLAPSED} /></Twisty>ad822</TreeRow>
                  <TreeRow $track={0.15}><Twisty><Arrow d={EXPANDED} /></Twisty>nmosfet</TreeRow>
                  {nmosfetParts.map(([name, track], i) => (
                    <TreeRow key={i} $child $track={track} $selected={i === 0}>{name}</TreeRow>
                  ))}
                </TreeList>
                <VScroll>
                  <ScrollStep $side="top"><Arrow d="M4 11L8 7L12 11Z" /></ScrollStep>
                  <VTrack />
                  <Spacer />
                  <ScrollStep $side="bottom"><Arrow d="M4 6L8 10L12 6Z" /></ScrollStep>
                </VScroll>
              </Tree>
              <ShowModel>Show model</ShowModel>
              <InfoBox>
                <InfoLine>Name: BSS138W</InfoLine>
                <InfoLine $track={0.06}>Library: /home/johnny/.qucs/user_lib/nmosfet</InfoLine>
                <InfoRule $track={1.52}>----------------------------</InfoRule>
                <InfoLine $track={0.14}>BSS138W device from nmosfet library</InfoLine>
              </InfoBox>
              <SymbolRow>
                <SymbolLabel>Symbol:</SymbolLabel>
                <SymbolPreview />
              </SymbolRow>
            </DockPanel>
          </DockBody>
        </Dock>

        <Documents>
          <DocTabs>
            <DocTab $w={210} $active>
              <DocIcon />
              <DocName $w={136} $indent={7}>bss138-test.sch</DocName>
              <CloseMark />
            </DocTab>
            <DocTab $w={207}><DocName $w={143}>bss138-test.dpl</DocName><CloseMark /></DocTab>
            <DocTab $w={195}><DocName $w={132}>spice4qucs.cir</DocName><CloseMark /></DocTab>
          </DocTabs>
          <DocFrame>
            <Canvas><Schematic /></Canvas>
            <HScroll>
              <ScrollStep $side="left"><Arrow d="M11 4L6 8L11 12Z" /></ScrollStep>
            </HScroll>
          </DocFrame>
        </Documents>
      </Workspace>
      <StatusBar>Ready.</StatusBar>

      <Annotations width="1737" height="1463" viewBox="0 0 1737 1463">
        <g fill="#0055ff" stroke="#0055ff">
          <path d="M327.5 804L875 538.5" strokeWidth="5" />
          <path d="M897 524L866 523.5L870.7 534L876 543L871 558Z" stroke="none" />
          <path d="M311.5 806L166 1287" strokeWidth="5" />
          <path d="M159.3 1310.3L152 1268L158.3 1281.7L168 1284L180.5 1288.3Z" stroke="none" />
        </g>
      </Annotations>
    </Window>
  );
}
